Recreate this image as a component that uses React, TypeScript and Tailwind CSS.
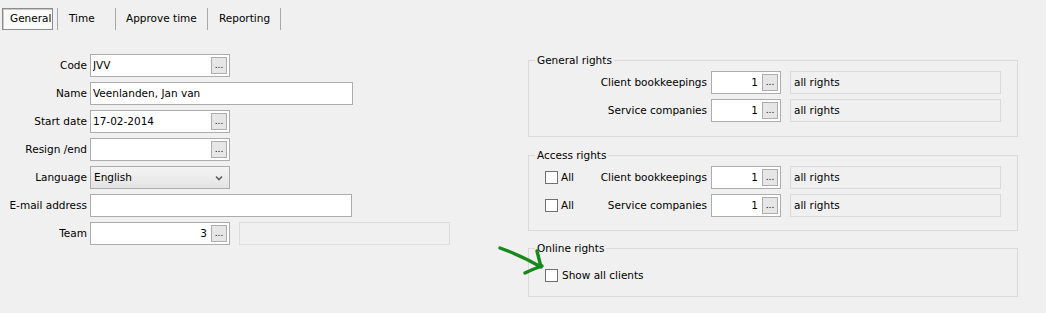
import React from "react";

const font = { fontFamily: '"DejaVu Sans", "Liberation Sans", sans-serif' };

function DotsButton() {
  return (
    <div className="flex h-[17px] w-[16px] shrink-0 items-end justify-center border border-[#adadad] bg-[#e6e6e6] pb-[3px] text-[9px] leading-none text-black">
      ...
    </div>
  );
}

function TextBox({
  w,
  value,
  right,
  button,
}: {
  w: string;
  value?: string;
  right?: boolean;
  button?: boolean;
}) {
  return (
    <div className={`flex h-[23px] ${w} shrink-0 items-center border border-[#acacac] bg-white pl-[2px] pr-[2px]`}>
      <div className={`flex-1 truncate ${right ? "pr-[4px] text-right" : ""}`}>{value}</div>
      {button && <DotsButton />}
    </div>
  );
}

function Row({ label, children }: { label: string; children: React.ReactNode }) {
  return (
    <div className="flex items-center">
      <div className="w-[90px] shrink-0 pr-[3px] text-right">{label}</div>
      {children}
    </div>
  );
}

function Checkbox() {
  return <div className="h-[13px] w-[13px] shrink-0 border border-[#707070] bg-white" />;
}

function RightsRow({ label, all }: { label: string; all?: boolean }) {
  return (
    <div className="flex items-center">
      <div className="flex w-[178px] shrink-0 items-center">
        {all && (
          <div className="flex items-center pl-[16px]">
            <Checkbox />
            <span className="pl-[3px]">All</span>
          </div>
        )}
        <div className="flex-1 text-right">{label}</div>
      </div>
      <div className="ml-[4px]">
        <TextBox w="w-[70px]" value="1" right button />
      </div>
      <div className="ml-[9px] flex h-[23px] w-[211px] items-center border border-[#d9d9d9] bg-[#f0f0f0] pl-[3px]">
        all rights
      </div>
    </div>
  );
}

function Group({
  title,
  children,
  className,
}: {
  title: string;
  children: React.ReactNode;
  className?: string;
}) {
  return (
    <fieldset className={`border border-[#d9d9d9] ${className ?? ""}`}>
      <legend className="ml-[6px] px-[2px] leading-[13px]">{title}</legend>
      {children}
    </fieldset>
  );
}

export default function App() {
  return (
    <div
      className="relative h-[313px] w-[1046px] overflow-hidden bg-[#f0f0f0] text-[10.5px] text-black"
      style={font}
    >
      {/* Tabs */}
      <div className="flex items-center pt-[8px]">
        <div className="ml-[2px] flex h-[22px] w-[51px] items-center border border-[#8c8c8c] bg-[#fafafa] pl-[7px] shadow-[inset_1px_1px_0_#c8c8c8]">
          General
        </div>
        <div className="ml-[4px] h-[22px] w-px bg-[#a8a8a8]" />
        <div className="flex h-[22px] w-[57px] items-center pl-[11px]">Time</div>
        <div className="h-[22px] w-px bg-[#a8a8a8]" />
        <div className="flex h-[22px] w-[91px] items-center pl-[10px]">Approve time</div>
        <div className="h-[22px] w-px bg-[#a8a8a8]" />
        <div className="flex h-[22px] w-[72px] items-center pl-[11px]">Reporting</div>
        <div className="h-[22px] w-px bg-[#a8a8a8]" />
      </div>

      {/* Content */}
      <div className="mt-[23px] flex items-start">
        {/* Left form */}
        <div className="flex w-[528px] shrink-0 flex-col gap-[5px] pt-[1px]">
          <Row label="Code">
            <TextBox w="w-[140px]" value="JVV" button />
          </Row>
          <Row label="Name">
            <TextBox w="w-[263px]" value="Veenlanden, Jan van" />
          </Row>
          <Row label="Start date">
            <TextBox w="w-[140px]" value="17-02-2014" button />
          </Row>
          <Row label="Resign /end">
            <TextBox w="w-[140px]" value="" button />
          </Row>
          <Row label="Language">
            <div className="flex h-[23px] w-[140px] items-center justify-between border border-[#acacac] bg-gradient-to-b from-[#f4f4f4] to-[#e4e4e4] pl-[3px] pr-[6px]">
              <span>English</span>
              <svg width="8" height="6" viewBox="0 0 8 6">
                <path d="M1 1.5 L4 4.5 L7 1.5" fill="none" stroke="#606060" strokeWidth="1.6" />
              </svg>
            </div>
          </Row>
          <Row label="E-mail address">
            <TextBox w="w-[262px]" value="" />
          </Row>
          <Row label="Team">
            <TextBox w="w-[140px]" value="3" right button />
            <div className="ml-[9px] h-[23px] w-[211px] border border-[#dcdcdc] bg-[#f0f0f0]" />
          </Row>
        </div>

        {/* Right groups */}
        <div className="flex w-[490px] shrink-0 flex-col pt-[1px]">
          <Group title="General rights">
            <div className="flex flex-col gap-[5px] pb-[14px] pt-[4px]">
              <RightsRow label="Client bookkeepings" />
              <RightsRow label="Service companies" />
            </div>
          </Group>
          <Group title="Access rights" className="mt-[12px]">
            <div className="flex flex-col gap-[5px] pb-[13px] pt-[4px]">
              <RightsRow label="Client bookkeepings" all />
              <RightsRow label="Service companies" all />
            </div>
          </Group>
          <Group title="Online rights" className="mt-[11px]">
            <div className="flex items-center pb-[12px] pl-[16px] pt-[13px]">
              <Checkbox />
              <span className="pl-[4px]">Show all clients</span>
            </div>
          </Group>
        </div>
      </div>

      {/* Green annotation arrow */}
      <svg
        className="absolute left-[494px] top-[242px]"
        width="56"
        height="40"
        viewBox="0 0 56 40"
        fill="none"
      >
        <path
          d="M6 6 Q26 13 47 25 M43 9 Q45 17 47 25 M31 31 Q39 27 48 24"
          stroke="#17891b"
          strokeWidth="3.4"
          strokeLinecap="round"
          strokeLinejoin="round"
        />
      </svg>
    </div>
  );
}
